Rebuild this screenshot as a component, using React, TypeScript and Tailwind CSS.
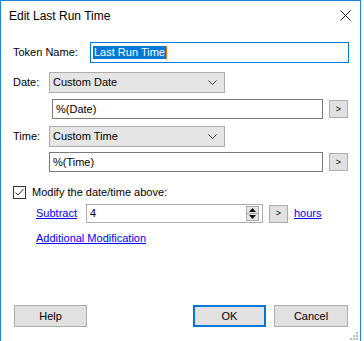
import React from 'react';

const SmallArrowButton = ({ className = '' }: { className?: string }) => (
  <button
    type="button"
    className={`flex h-[18px] w-[19px] shrink-0 items-center justify-center border border-[#adadad] bg-[#e1e1e1] text-[9px] leading-none text-black ${className}`}
  >
    &gt;
  </button>
);

const Chevron = () => (
  <svg width="9" height="5" viewBox="0 0 9 5" className="shrink-0">
    <polyline points="0.5,0.5 4.5,4.5 8.5,0.5" fill="none" stroke="#333" strokeWidth="1" />
  </svg>
);

const Select = ({ value }: { value: string }) => (
  <div className="flex h-[21px] w-[176px] items-center justify-between border border-[#adadad] bg-[#e5e5e5] pl-[3px] pr-[7px]">
    <span>{value}</span>
    <Chevron />
  </div>
);

export default function App() {
  return (
    <div className="h-[341px] w-[364px] overflow-hidden bg-white font-['Liberation_Sans',Arial,sans-serif] text-[11px] text-black">
      <div className="relative h-[341px] w-[361px] border-x border-t border-[#1883d7]">
        {/* title bar */}
        <div className="flex h-[29px] items-center justify-between pl-[8px] pr-[9px]">
          <span className="text-[12px]">Edit Last Run Time</span>
          <svg width="11" height="11" viewBox="0 0 11 11">
            <path d="M0.5 0.5 L10.5 10.5 M10.5 0.5 L0.5 10.5" stroke="#111" strokeWidth="1" />
          </svg>
        </div>

        <div className="flex flex-col">
          {/* token name */}
          <div className="mt-[12px] flex h-[21px] items-center">
            <span className="ml-[12px] w-[77px]">Token Name:</span>
            <div className="flex h-[21px] w-[259px] items-center border border-[#0078d7] pl-[2px]">
              <span className="bg-[#0078d7] px-[1px] text-white leading-[13px]">Last Run Time</span>
              <span className="h-[13px] w-[1px] bg-[#e06c00]" />
            </div>
          </div>

          {/* date */}
          <div className="mt-[9px] flex h-[21px] items-center">
            <span className="ml-[12px] w-[36px]">Date:</span>
            <Select value="Custom Date" />
          </div>
          <div className="mt-[6px] flex h-[20px] items-center">
            <div className="ml-[51px] flex h-[20px] w-[271px] items-center border border-[#7a7a7a] pl-[3px]">%(Date)</div>
            <SmallArrowButton className="ml-[6px]" />
          </div>

          {/* time */}
          <div className="mt-[7px] flex h-[21px] items-center">
            <span className="ml-[12px] w-[36px]">Time:</span>
            <Select value="Custom Time" />
          </div>
          <div className="mt-[5px] flex h-[20px] items-center">
            <div className="ml-[48px] flex h-[20px] w-[274px] items-center border border-[#7a7a7a] pl-[3px]">%(Time)</div>
            <SmallArrowButton className="ml-[6px]" />
          </div>

          {/* modify */}
          <div className="mt-[14px] flex h-[13px] items-center">
            <div className="ml-[12px] flex h-[13px] w-[13px] items-center justify-center border border-[#333]">
              <svg width="11" height="11" viewBox="0 0 11 11">
                <polyline points="1.5,5.5 4,8 9.5,2" fill="none" stroke="#333" strokeWidth="1" />
              </svg>
            </div>
            <span className="ml-[6px]">Modify the date/time above:</span>
          </div>
          <div className="mt-[5px] flex h-[19px] items-center">
            <a className="ml-[35px] w-[50px] text-[#0000ff] underline">Subtract</a>
            <div className="flex h-[19px] w-[177px] items-center justify-between border border-[#adadad] pl-[3px] pr-[3px]">
              <span>4</span>
              <div className="flex h-[15px] w-[13px] flex-col border border-[#adadad] bg-[#e5e5e5]">
                <div className="flex flex-1 items-center justify-center border-b border-[#adadad]">
                  <svg width="7" height="4" viewBox="0 0 7 4"><polygon points="3.5,0 7,4 0,4" fill="#111" /></svg>
                </div>
                <div className="flex flex-1 items-center justify-center">
                  <svg width="7" height="4" viewBox="0 0 7 4"><polygon points="0,0 7,0 3.5,4" fill="#111" /></svg>
                </div>
              </div>
            </div>
            <SmallArrowButton className="ml-[6px]" />
            <a className="ml-[6px] text-[#0000ff] underline">hours</a>
          </div>
          <div className="mt-[8px] flex h-[14px] items-center">
            <a className="ml-[35px] text-[#0000ff] underline">Additional Modification</a>
          </div>

          {/* buttons */}
          <div className="mt-[60px] flex h-[22px] items-center">
            <button type="button" className="ml-[13px] h-[22px] w-[73px] border border-[#adadad] bg-[#e1e1e1]">Help</button>
            <button type="button" className="ml-[106px] h-[22px] w-[73px] border-2 border-[#0078d7] bg-[#e1e1e1]">OK</button>
            <button type="button" className="ml-[8px] h-[22px] w-[74px] border border-[#adadad] bg-[#e1e1e1]">Cancel</button>
          </div>
        </div>

        {/* resize grip */}
        <svg width="8" height="8" viewBox="0 0 8 8" className="absolute bottom-[1px] right-[2px]">
          <rect x="6" y="0" width="2" height="2" fill="#bbb" />
          <rect x="3" y="3" width="2" height="2" fill="#bbb" />
          <rect x="6" y="3" width="2" height="2" fill="#bbb" />
          <rect x="0" y="6" width="2" height="2" fill="#bbb" />
          <rect x="3" y="6" width="2" height="2" fill="#bbb" />
          <rect x="6" y="6" width="2" height="2" fill="#bbb" />
        </svg>
      </div>
    </div>
  );
}
